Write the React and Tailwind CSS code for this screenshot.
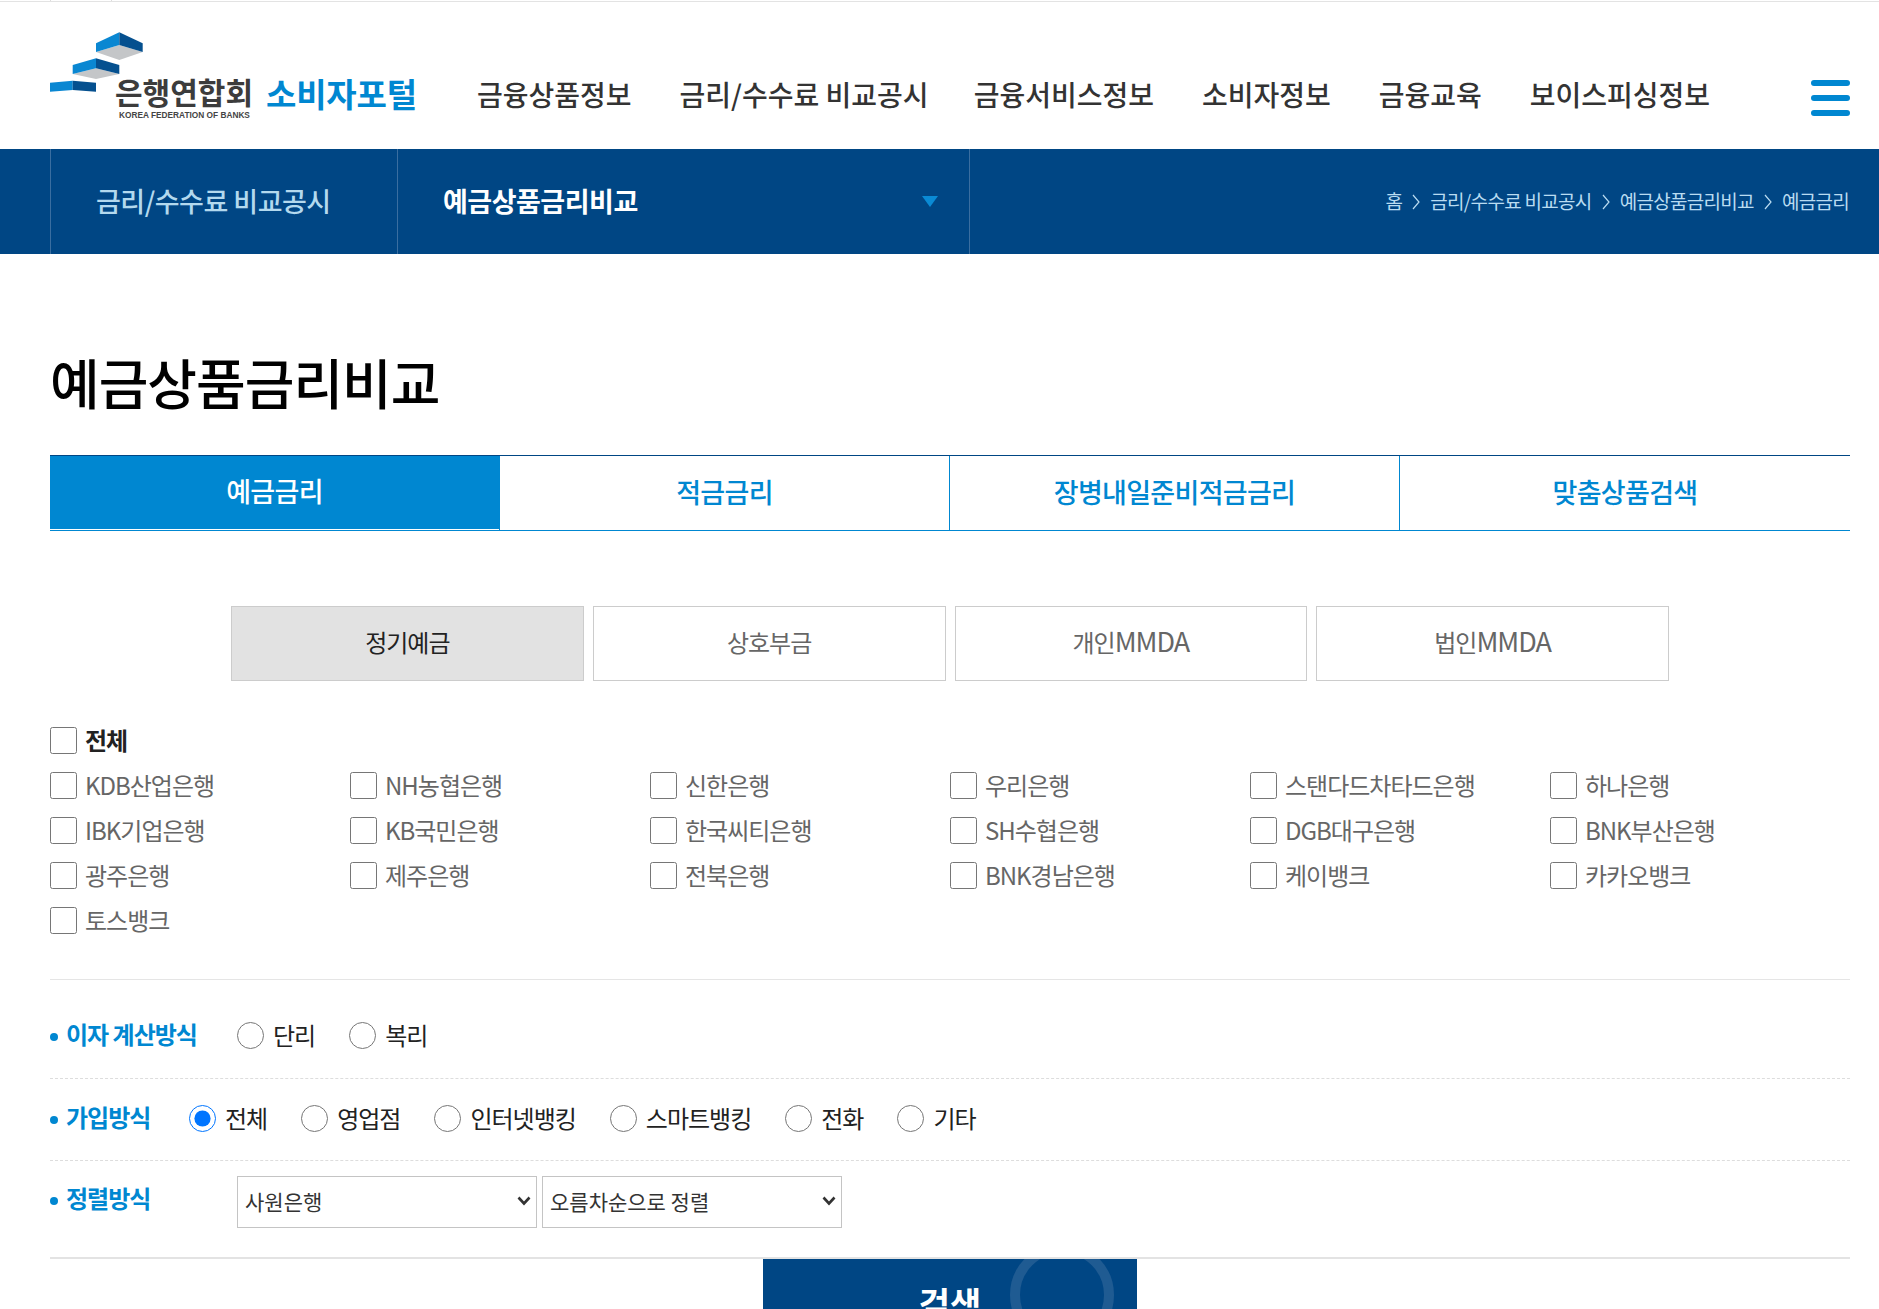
const nav = ["금융상품정보", "금리/수수료 비교공시", "금융서비스정보", "소비자정보", "금융교육", "보이스피싱정보"];
const crumbs = ["금리/수수료 비교공시", "예금상품금리비교", "예금금리"];
const tabs = ["예금금리", "적금금리", "장병내일준비적금금리", "맞춤상품검색"];
const banks = [
  "KDB산업은행", "NH농협은행", "신한은행", "우리은행", "스탠다드차타드은행", "하나은행",
  "IBK기업은행", "KB국민은행", "한국씨티은행", "SH수협은행", "DGB대구은행", "BNK부산은행",
  "광주은행", "제주은행", "전북은행", "BNK경남은행", "케이뱅크", "카카오뱅크",
  "토스뱅크",
];
const joins = ["전체", "영업점", "인터넷뱅킹", "스마트뱅킹", "전화", "기타"];

function Cubes() {
  return (
    <svg className="absolute left-0 top-[-2px]" width="100" height="100" viewBox="50 0 100 100">
      <polygon points="96,52 119.3,45 142.7,52 119.3,60" fill="#c4c6c8" />
      <polygon points="119.3,32.3 96,43.3 96,52 119.3,45" fill="#0a87d2" />
      <polygon points="119.3,32.3 142.7,43.3 142.7,52 119.3,45" fill="#05508f" />
      <polygon points="72.7,74 96,68.3 119.3,74 96,79" fill="#c4c6c8" />
      <polygon points="96,58.3 72.7,65 72.7,74 96,68.3" fill="#0a87d2" />
      <polygon points="96,58.3 119.3,65 119.3,74 96,68.3" fill="#05508f" />
      <polygon points="72.7,80.7 50,82.7 50,91.7 72.7,90" fill="#0a87d2" />
      <polygon points="72.7,80.7 96,82.7 96,91.7 72.7,90" fill="#05508f" />
    </svg>
  );
}

function Chevron() {
  return (
    <svg width="10" height="20" viewBox="0 0 10 20" fill="none" stroke="#b9dcf1" strokeWidth="1.2" className="mx-[9px]">
      <path d="M2 3l6 7-6 7" />
    </svg>
  );
}

function RowLabel({ children, className }) {
  return (
    <div className={`flex items-center shrink-0 text-[24px] leading-[36px] tracking-[-1px] font-bold text-[#0087d1] ${className}`}>
      <span className="w-[8px] h-[8px] rounded-full bg-[#0087d1] mr-[8px] mt-[3px]" />
      <span className="pb-[2px]">{children}</span>
    </div>
  );
}

function Radio({ label, checked, name }) {
  return (
    <label className="flex items-center gap-[9px]">
      <input type="radio" name={name} defaultChecked={checked} className="w-[27px] h-[27px]" />
      <span className="text-[24px] leading-[36px] tracking-[-1px] text-[#222222] pb-[1px]">{label}</span>
    </label>
  );
}

function Select({ label }) {
  return (
    <div className="relative">
      <select className="block appearance-none w-[300px] h-[52px] border border-[#c4c4c4] pl-[7px] text-[21px] text-[#333333]">
        <option>{label}</option>
      </select>
      <svg className="absolute right-[6px] top-[20px] pointer-events-none" width="14" height="10" viewBox="0 0 14 10" fill="none" stroke="#333333" strokeWidth="2.6">
        <path d="M1.5 1.5L7 7.5l5.5-6" />
      </svg>
    </div>
  );
}

const subBase = "h-[75px] flex items-center justify-center pb-[4px] border border-[#cccccc] text-[24px] tracking-[-1px]";

export default function App() {
  return (
    <div className="h-[1309px] overflow-hidden bg-white font-['Noto_Sans_CJK_KR','Noto_Sans',sans-serif]">
      <div className="h-[2px] border-b border-[#e3e3e3]">
        <div className="ml-[50px] w-[62px] h-[1px] border-x border-[#dddddd]" />
      </div>

      <header className="h-[147px] flex items-start">
        <div className="relative ml-[50px] w-[427px] h-[147px] shrink-0">
          <Cubes />
          <div className="flex items-start pl-[65px] pt-[71px]">
            <div className="w-[151px]">
              <div className="text-[30px] leading-[36px] font-bold text-[#3c3c3c] whitespace-nowrap">은행연합회</div>
              <div className="mt-[2px] pl-[4px] text-[8.3px] leading-[9px] font-bold text-[#444444] whitespace-nowrap font-['Liberation_Sans',sans-serif]">KOREA FEDERATION OF BANKS</div>
            </div>
            <div className="text-[33px] leading-[40px] font-bold text-[#0087d1] tracking-[-0.2px] whitespace-nowrap">소비자포털</div>
          </div>
        </div>
        <nav className="flex gap-[48px] pt-[72px]">
          {nav.map((n, i) => (
            <a key={n} className={i === 2 ? "-ml-[3px] text-[28px] leading-[40px] font-medium text-[#333333] whitespace-nowrap" : "text-[28px] leading-[40px] font-medium text-[#333333] whitespace-nowrap"}>{n}</a>
          ))}
        </nav>
        <div className="ml-auto mr-[29px] pt-[78px] flex flex-col gap-[9px]">
          <span className="block w-[39px] h-[6px] rounded-full bg-[#0087d1]" />
          <span className="block w-[39px] h-[6px] rounded-full bg-[#0087d1]" />
          <span className="block w-[39px] h-[6px] rounded-full bg-[#0087d1]" />
        </div>
      </header>

      <div className="h-[105px] bg-[#004684] pl-[50px] flex items-stretch">
        <div className="w-[347px] border-l border-[#3a6ea0] pl-[45px] flex items-center text-[27px] font-medium tracking-[-0.5px] text-[#b3d9ee]">
          금리/수수료 비교공시
        </div>
        <div className="w-[572px] border-l border-[#3a6ea0] pl-[45px] pr-[31px] flex items-center justify-between text-[27px] font-bold tracking-[-0.5px] text-white">
          예금상품금리비교
          <span className="w-0 h-0 border-x-[8px] border-x-transparent border-t-[11px] border-t-[#0a8ad4]" />
        </div>
        <div className="flex-1 border-l border-[#3a6ea0] flex items-center justify-end pr-[30px] text-[19px] tracking-[-0.7px] text-[#b9dcf1]">
          <span>홈</span>
          {crumbs.map((c) => (
            <span key={c} className="flex items-center">
              <Chevron />
              {c}
            </span>
          ))}
        </div>
      </div>

      <main className="pl-[50px] pr-[29px]">
        <h1 className="pt-[93px] text-[54px] leading-[70px] font-medium tracking-[-1px] text-black">예금상품금리비교</h1>

        <div className="mt-[38px] grid grid-cols-[449px_450px_450px_1fr] border-t border-b border-t-[#004684] border-b-[#0087d1]">
          {tabs.map((t, i) => (
            <div
              key={t}
              className={
                i === 0
                  ? "h-[74px] flex items-center justify-center pb-[2px] text-[27px] font-medium tracking-[-0.7px] bg-[#0087d1] text-white border-b border-white"
                  : "h-[74px] flex items-center justify-center pb-[2px] text-[27px] font-medium tracking-[-0.7px] text-[#0087d1] border-l border-[#0087d1]"
              }
            >
              {t}
            </div>
          ))}
        </div>

        <div className="mt-[75px] mx-auto w-[1438px] grid grid-cols-4 gap-[9px]">
          <div className={`${subBase} bg-[#e2e2e2] text-[#222222]`}>정기예금</div>
          <div className={`${subBase} bg-white text-[#666666]`}>상호부금</div>
          <div className={`${subBase} bg-white text-[#666666]`}>개인<span className="text-[27px] tracking-[-1px]">MMDA</span></div>
          <div className={`${subBase} bg-white text-[#666666]`}>법인<span className="text-[27px] tracking-[-1px]">MMDA</span></div>
        </div>

        <div className="mt-[37px] pb-[36px] border-b border-[#e5e5e5]">
          <label className="h-[45px] flex items-center gap-[8px]">
            <input type="checkbox" className="w-[27px] h-[27px]" />
            <span className="text-[24px] font-bold tracking-[-1px] text-[#222222] pb-[2px]">전체</span>
          </label>
          <div className="grid grid-cols-6">
            {banks.map((b) => (
              <label key={b} className="h-[45px] flex items-center gap-[8px]">
                <input type="checkbox" className="w-[27px] h-[27px]" />
                <span className="text-[24px] tracking-[-1px] text-[#666666] pb-[2px]">{b}</span>
              </label>
            ))}
          </div>
        </div>

        <div className="flex items-center pt-[36px] pb-[24px] border-b border-dashed border-[#dddddd]">
          <RowLabel className="w-[187px]">이자 계산방식</RowLabel>
          <div className="flex gap-[34px]">
            <Radio name="calc" label="단리" />
            <Radio name="calc" label="복리" />
          </div>
        </div>

        <div className="flex items-center pt-[20px] pb-[23px] border-b border-dashed border-[#dddddd]">
          <RowLabel className="w-[139px]">가입방식</RowLabel>
          <div className="flex gap-[34px]">
            {joins.map((j, i) => (
              <Radio key={j} name="join" label={j} checked={i === 0} />
            ))}
          </div>
        </div>

        <div className="flex items-start pt-[15px] pb-[29px] border-b-2 border-[#e3e3e3]">
          <RowLabel className="w-[187px] mt-[4px]">정렬방식</RowLabel>
          <div className="flex gap-[5px]">
            <Select label="사원은행" />
            <Select label="오름차순으로 정렬" />
          </div>
        </div>

        <div className="flex justify-center">
          <button className="relative w-[374px] h-[90px] pb-[4px] overflow-hidden bg-[#004684] text-white text-[34px] font-bold flex items-center justify-center">
            <span className="absolute left-[247px] top-[-16px] w-[104px] h-[104px] rounded-full border-[10px] border-[#1f5b92]" />
            <span className="relative">검색</span>
          </button>
        </div>
      </main>
    </div>
  );
}
